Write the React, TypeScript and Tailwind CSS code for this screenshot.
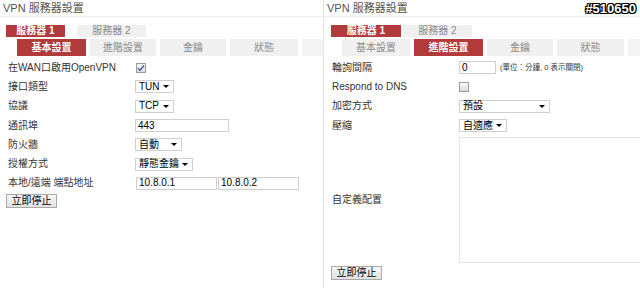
import React from "react";

const font = "font-['Liberation_Sans','Noto_Sans_CJK_TC',sans-serif]";

function Select({ value, width }: { value: string; width: string }) {
  return (
    <div
      className={`flex h-[13px] items-center justify-between border border-[#cfcfcf] bg-white pr-[4px] pl-[3px] text-[10px] leading-none text-black ${width}`}
    >
      <span>{value}</span>
      <span className="h-0 w-0 border-x-[3px] border-t-[3px] border-x-transparent border-t-black" />
    </div>
  );
}

function Input({ value, width }: { value: string; width: string }) {
  return (
    <div
      className={`flex h-[13px] items-center border border-[#cfcfcf] bg-white pl-[2px] text-[10px] leading-none text-black ${width}`}
    >
      {value}
    </div>
  );
}

function Checkbox({ checked }: { checked?: boolean }) {
  return (
    <div className="flex h-[10px] w-[10px] items-center justify-center border border-[#9a9a9a] bg-gradient-to-b from-[#fafafa] to-[#dcdcdc]">
      {checked && (
        <svg width="8" height="8" viewBox="0 0 8 8">
          <path d="M1 4.2 L3 6.3 L7 1.5" stroke="#3a5fa8" strokeWidth="1.4" fill="none" />
        </svg>
      )}
    </div>
  );
}

function Row({ label, children }: { label: string; children?: React.ReactNode }) {
  return (
    <div className="flex h-[19.3px] items-center">
      <div className="w-[135px] shrink-0 pl-[8px] text-[10px] leading-none text-[#333]">{label}</div>
      <div className="flex items-center gap-[1px]">{children}</div>
    </div>
  );
}

function Button() {
  return (
    <div className="flex h-[14px] w-[51px] items-center justify-center border border-[#a9a9a9] bg-gradient-to-b from-[#f7f7f7] to-[#e2e2e2] text-[10px] leading-none text-black">
      立即停止
    </div>
  );
}

type Tab = { label: string; w: string; active?: boolean };

function Header({ main, subs, mainGap, mainPad }: { main: Tab[]; subs: Tab[]; mainGap: string; mainPad: string }) {
  return (
    <>
      <div className="h-[17px] border-b border-[#eeeeee] pl-[3px] text-[11px] leading-[17px] text-[#555]">
        VPN 服務器設置
      </div>
      <div className={`mt-[8px] flex h-[12px] ${mainGap} ${mainPad}`}>
        {main.map((t) => (
          <div
            key={t.label}
            className={`flex items-center justify-center text-[10px] leading-none ${t.w} ${
              t.active ? "bg-[#b23a3b] font-bold text-white" : "bg-[#f0f0f0] text-[#8a8a8a]"
            }`}
          >
            {t.label}
          </div>
        ))}
      </div>
      <div className="mt-[2px] flex h-[17px] gap-[4px]">
        {subs.map((t) => (
          <div
            key={t.label}
            className={`flex shrink-0 items-center justify-center text-[10px] leading-none ${t.w} ${
              t.active ? "bg-[#b23a3b] font-bold text-white" : "bg-[#f0f0f0] text-[#8a8a8a]"
            }`}
          >
            {t.label}
          </div>
        ))}
        <div className="flex-1 bg-[#f3f3f3]" />
      </div>
    </>
  );
}

export default function App() {
  return (
    <div className={`relative flex h-[288px] w-[640px] overflow-hidden bg-white ${font}`}>
      <div className="w-[324px] shrink-0 border-r border-[#e4e4e4]">
        <Header
          mainPad="pl-[6px]"
          mainGap="gap-[12px]"
          main={[
            { label: "服務器 1", w: "w-[59px]", active: true },
            { label: "服務器 2", w: "w-[69px]" },
          ]}
          subs={[
            { label: "基本設置", w: "ml-[17px] w-[69px]", active: true },
            { label: "進階設置", w: "w-[66px]" },
            { label: "金鑰", w: "w-[66px]" },
            { label: "狀態", w: "w-[68px]" },
          ]}
        />
        <div className="mt-[2px]">
          <Row label="在WAN口啟用OpenVPN">
            <div className="pl-[1px]">
              <Checkbox checked />
            </div>
          </Row>
          <Row label="接口類型">
            <Select value="TUN" width="w-[39px]" />
          </Row>
          <Row label="協議">
            <Select value="TCP" width="w-[39px]" />
          </Row>
          <Row label="通訊埠">
            <Input value="443" width="w-[94px]" />
          </Row>
          <Row label="防火牆">
            <Select value="自動" width="w-[47px]" />
          </Row>
          <Row label="授權方式">
            <Select value="靜態金鑰" width="w-[58px]" />
          </Row>
          <Row label="本地/遠端 端點地址">
            <Input value="10.8.0.1" width="ml-[1px] w-[81px]" />
            <Input value="10.8.0.2" width="w-[81px]" />
          </Row>
        </div>
        <div className="mt-[1px] pl-[6px]">
          <Button />
        </div>
      </div>

      <div className="min-w-0 flex-1">
        <Header
          mainPad="pl-[7px]"
          mainGap="gap-[2px]"
          main={[
            { label: "服務器 1", w: "w-[70px]", active: true },
            { label: "服務器 2", w: "w-[69px]" },
          ]}
          subs={[
            { label: "基本設置", w: "ml-[18px] w-[68px]" },
            { label: "進階設置", w: "w-[69px]", active: true },
            { label: "金鑰", w: "w-[66px]" },
            { label: "狀態", w: "w-[67px]" },
          ]}
        />
        <div className="mt-[2px]">
          <Row label="輪詢間隔">
            <Input value="0" width="w-[37px]" />
            <span className="ml-[3px] text-[7.5px] leading-none text-[#333]">(單位：分鐘, 0 表示關閉)</span>
          </Row>
          <Row label="Respond to DNS">
            <Checkbox />
          </Row>
          <Row label="加密方式">
            <Select value="預設" width="w-[91px]" />
          </Row>
          <Row label="壓縮">
            <Select value="自適應" width="w-[48px]" />
          </Row>
        </div>
        <div className="mt-[2px] flex h-[126px] items-center">
          <div className="w-[135px] shrink-0 pl-[8px] text-[10px] leading-none text-[#333]">自定義配置</div>
          <div className="h-full flex-1 border border-r-0 border-[#e2e2e2] bg-white" />
        </div>
        <div className="mt-[3px] pl-[7px]">
          <Button />
        </div>
      </div>

      <div className="absolute top-[2px] right-[4px] text-[13px] leading-none font-bold text-white [text-shadow:-1px_-1px_0_#000,1px_-1px_0_#000,-1px_1px_0_#000,1px_1px_0_#000,0_1px_0_#000,0_-1px_0_#000,1px_0_0_#000,-1px_0_0_#000]">
        #510650
      </div>
    </div>
  );
}
